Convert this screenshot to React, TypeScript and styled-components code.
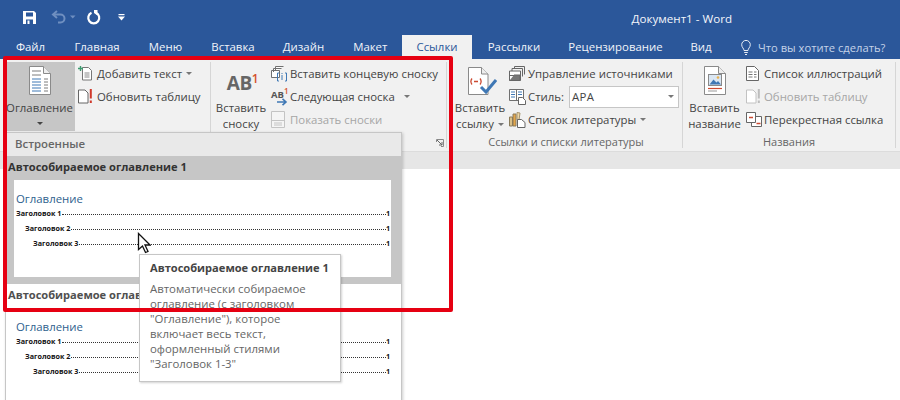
import React from "react";
import styled, { createGlobalStyle } from "styled-components";

const Global = createGlobalStyle`
  html, body { margin: 0; padding: 0; background: #fff; overflow: hidden; }
  * { box-sizing: border-box; }
`;

const Page = styled.div`
  position: relative;
  width: 900px;
  height: 400px;
  overflow: hidden;
  background: #fff;
  font-family: "Open Sans", "Noto Sans", sans-serif;
  font-size: 11.4px;
  color: #444;
  display: flex;
  flex-direction: column;
`;

const TitleBar = styled.div`
  height: 35px;
  flex: none;
  background: #2b579a;
  display: flex;
  align-items: center;
  padding-left: 22px;
  color: #fff;
`;
const Qat = styled.div`
  display: flex;
  align-items: center;
`;
const QatSlot = styled.div<{ $ml: number }>`
  margin-left: ${(p) => p.$ml}px;
  display: flex;
`;
const Title = styled.div`
  margin-left: auto;
  margin-right: 168px;
  margin-top: 1px;
  font-size: 11.6px;
  color: #f4f6fa;
`;

const Tabs = styled.div`
  height: 24px;
  flex: none;
  background: #2b579a;
  display: flex;
  padding-left: 0.5px;
`;
const Tab = styled.div<{ $active?: boolean; $w: number }>`
  width: ${(p) => p.$w}px;
  flex: none;
  text-align: center;
  line-height: 24px;
  white-space: nowrap;
  color: ${(p) => (p.$active ? "#2b579a" : "#f1f4f9")};
  background: ${(p) => (p.$active ? "#f1f1f1" : "transparent")};
`;
const Tell = styled.div`
  display: flex;
  align-items: center;
  gap: 7px;
  margin-left: 14px;
  font-size: 11.2px;
  color: #c5d3e8;
  white-space: nowrap;
`;

const Ribbon = styled.div`
  height: 93px;
  flex: none;
  background: #f1f1f1;
  border-bottom: 1px solid #dcdcdc;
  display: flex;
  padding: 3px 0 3px;
`;
const Group = styled.section<{ $w: number; $pad: number }>`
  position: relative;
  width: ${(p) => p.$w}px;
  flex: none;
  padding-left: ${(p) => p.$pad}px;
  border-right: 1px solid #d6d6d6;
  display: flex;
  flex-direction: column;
`;
const GroupBody = styled.div`
  display: flex;
  height: 69px;
  flex: none;
`;
const GroupLabel = styled.div`
  text-align: center;
  line-height: 16px;
  margin-top: 3px;
  padding-right: 6px;
  font-size: 11px;
  color: #666;
  white-space: nowrap;
`;
const Launcher = styled.svg`
  position: absolute;
  right: 2px;
  bottom: 1px;
`;

const BigButton = styled.div<{ $w: number; $on?: boolean }>`
  width: ${(p) => p.$w}px;
  flex: none;
  display: flex;
  flex-direction: column;
  align-items: center;
  padding-right: ${(p) => (p.$on ? 3 : 0)}px;
  background: ${(p) => (p.$on ? "#c6c6c6" : "transparent")};
  line-height: 16px;
  white-space: nowrap;
`;
const BigIcon = styled.div`
  height: 38px;
  flex: none;
  padding-bottom: 5px;
  display: flex;
  align-items: flex-end;
  justify-content: center;
`;
const Caret = styled.i<{ $dark?: boolean; $ml?: number }>`
  display: inline-block;
  width: 0;
  height: 0;
  border-left: 3px solid transparent;
  border-right: 3px solid transparent;
  border-top: 3px solid ${(p) => (p.$dark ? "#444" : "#777")};
  margin-left: ${(p) => p.$ml ?? 4}px;
  vertical-align: 2px;
`;
const CaretLine = styled.div`
  height: 16px;
  line-height: 14px;
  margin-left: -4px;
`;
const BigAb = styled.div`
  font-size: 19px;
  font-weight: 700;
  line-height: 24px;
  color: #666;
  margin-left: 3px;
  letter-spacing: -0.4px;
`;
const SupOne = styled.span<{ $size: number }>`
  color: #d4502c;
  font-size: ${(p) => p.$size}px;
  font-weight: 600;
  vertical-align: super;
  line-height: 0;
`;

const SmallColumn = styled.div<{ $ml: number }>`
  margin-left: ${(p) => p.$ml}px;
  display: flex;
  flex-direction: column;
`;
const SmallRow = styled.div<{ $off?: boolean }>`
  height: 23px;
  display: flex;
  align-items: center;
  white-space: nowrap;
  color: ${(p) => (p.$off ? "#a6a6a6" : "#444")};
`;
const IconBox = styled.div<{ $w: number }>`
  width: ${(p) => p.$w}px;
  flex: none;
  display: flex;
  align-items: center;
`;
const SmallAb = styled.span`
  position: relative;
  display: block;
  width: 17px;
  height: 18px;
  font-size: 9.5px;
  font-weight: 700;
  line-height: 13px;
  color: #555;
`;
const NextArrow = styled.svg`
  position: absolute;
  right: 0;
  bottom: 0;
`;
const SelectBox = styled.div`
  width: 110px;
  height: 22px;
  margin-left: 5px;
  background: #fff;
  border: 1px solid #c6c6c6;
  display: flex;
  align-items: center;
  justify-content: space-between;
  padding: 0 4px 0 2px;
  letter-spacing: 0.4px;
`;

const Band = styled.div`
  height: 17px;
  flex: none;
  background: #e6e6e6;
`;

const Gallery = styled.div`
  position: absolute;
  left: 5px;
  top: 132px;
  width: 397px;
  height: 290px;
  background: #fff;
  border: 1px solid #c6c6c6;
  box-shadow: 1px 1px 3px rgba(0, 0, 0, 0.2);
`;
const GalleryHead = styled.div`
  height: 23px;
  background: #e9e9e9;
  line-height: 22px;
  padding-left: 9px;
  font-weight: 600;
  color: #666;
`;
const GalleryItem = styled.div<{ $on?: boolean }>`
  background: ${(p) => (p.$on ? "#c6c6c6" : "#fff")};
  height: ${(p) => (p.$on ? 128 : 120)}px;
  padding: 0 10px 0 8px;
`;
const ItemTitle = styled.div<{ $on?: boolean }>`
  height: 24px;
  line-height: 21px;
  margin-left: -6px;
  font-size: 11.1px;
  font-weight: 700;
  color: ${(p) => (p.$on ? "#333" : "#505050")};
  white-space: nowrap;
`;
const Preview = styled.div`
  height: 97px;
  background: #fff;
  padding: 12px 1px 0 2px;
`;
const PreviewHead = styled.div`
  color: #2e5f8e;
  font-size: 11.4px;
  line-height: 14px;
`;
const TocRow = styled.div<{ $indent: number }>`
  display: flex;
  align-items: baseline;
  height: 15px;
  line-height: 15px;
  font-size: 7.2px;
  font-weight: 700;
  color: #111;
  padding-left: ${(p) => p.$indent}px;
  white-space: nowrap;
`;
const Leader = styled.span`
  flex: 1;
  border-bottom: 1px dotted #333;
  margin-left: 1px;
  transform: translateY(-1px);
`;

const Tooltip = styled.div`
  position: absolute;
  left: 139px;
  top: 254px;
  width: 202px;
  height: 128px;
  background: #fff;
  border: 1px solid #c6c6c6;
  box-shadow: 1px 1px 2px rgba(0, 0, 0, 0.18);
  padding: 5px 10px;
`;
const TipTitle = styled.div`
  font-size: 11.1px;
  font-weight: 700;
  line-height: 16px;
  color: #444;
  margin-bottom: 5px;
  white-space: nowrap;
`;
const TipLine = styled.div`
  line-height: 15px;
  color: #666;
  white-space: nowrap;
`;

const Annotation = styled.div`
  position: absolute;
  left: 3px;
  top: 56px;
  width: 450px;
  height: 256px;
  border: 4.5px solid #e60012;
  border-radius: 2px;
`;
const Pointer = styled.svg`
  position: absolute;
  left: 137px;
  top: 232px;
`;

const SaveIcon = () => (
  <svg width="15" height="15" viewBox="0 0 15 15">
    <path d="M1 1h11l2 2v11H1z" fill="#fff" />
    <rect x="4" y="2.5" width="7" height="4" fill="#2b579a" />
    <rect x="4" y="9.5" width="7" height="4.5" fill="#2b579a" />
    <rect x="5.5" y="10.5" width="2" height="3.5" fill="#fff" />
  </svg>
);
const UndoIcon = () => (
  <svg width="25" height="15" viewBox="0 0 25 15" fill="none">
    <path d="M2.500 4.500h7a4 4 0 0 1 0 8H7" stroke="#6f8fc0" strokeWidth="2" />
    <path d="M6 1 2 4.500 6 8" stroke="#6f8fc0" strokeWidth="2" />
    <path d="M19 5.500h5.500l-2.750 3z" fill="#6f8fc0" />
  </svg>
);
const RedoIcon = () => (
  <svg width="15" height="15" viewBox="0 0 15 15" fill="none">
    <path d="M5.500 2.800a5.500 5.500 0 1 0 4.500 0" stroke="#fff" strokeWidth="2.200" />
    <path d="M8 0h3.500v5.500L8 3z" fill="#fff" />
  </svg>
);
const QatMore = () => (
  <svg width="7" height="7" viewBox="0 0 7 7">
    <rect x="0.500" y="0" width="6" height="1.200" fill="#fff" />
    <path d="M0 2.500h7L3.500 6.500z" fill="#fff" />
  </svg>
);
const Bulb = () => (
  <svg width="10" height="15" viewBox="0 0 10 15" fill="none" stroke="#e6ecf5" strokeWidth="1">
    <path d="M3 10.500C3 8.500 .7 7.500 .7 4.700a4.300 4.300 0 0 1 8.600 0C9.300 7.500 7 8.500 7 10.500z" />
    <path d="M3.200 12.500h3.600M4 14.500h2" />
  </svg>
);
const Sheet = ({ children }: { children?: React.ReactNode }) => (
  <svg width="22" height="29" viewBox="0 0 22 29" fill="none">
    <path d="M.5.500h14l7 7v21H.5z" fill="#fff" stroke="#8a8a8a" />
    <path d="M14.500.500v7h7" fill="#eee" stroke="#8a8a8a" />
    {children}
  </svg>
);
const TocIcon = () => (
  <Sheet>
    <path d="M3 5h9M3 9h9" stroke="#7d7d7d" />
    <path d="M3 13h9M3 16h9M3 19h9M3 22h9M3 25h9" stroke="#3f78b5" />
    <path d="M15 13h4M15 16h4M15 19h4M15 22h4M15 25h4" stroke="#7d7d7d" />
  </Sheet>
);
const AddTextIcon = () => (
  <svg width="15" height="15" viewBox="0 0 15 15" fill="none">
    <path d="M4.500 1.500h6l3 3v9.500h-9z" fill="#fff" stroke="#777" />
    <path d="M6.500 7h5M6.500 9h5M6.500 11h5" stroke="#8a8a8a" />
    <path d="M2.500 0v5M0 2.500h5" stroke="#3c9a6f" strokeWidth="1.400" />
  </svg>
);
const UpdateIcon = ({ off }: { off?: boolean }) => {
  const line = off ? "#c2c2c2" : "#666";
  const mark = off ? "#bdbdbd" : "#d0392b";
  return (
    <svg width="15" height="15" viewBox="0 0 15 15" fill="none">
      <path d="M.5 1h6.500l3 3v10H.5z" fill="#fff" stroke={line} />
      <path d="M12.800 0v9.500M12.800 11.500v2.500" stroke={mark} strokeWidth="2" />
    </svg>
  );
};
const EndnoteIcon = () => (
  <svg width="17" height="16" viewBox="0 0 17 16" fill="none">
    <path d="M4.500 4V.5h8M2.500 6V2.500h8M.5 8V4.500h8v7H.5z" stroke="#707070" fill="#fff" />
    <path d="M8 7H6.500v8H8M14 7h1.500v8H14" stroke="#3f78b5" />
    <path d="M11 7v1M11 9v5" stroke="#3f78b5" />
  </svg>
);
const NoteIcon = () => (
  <svg width="16" height="17" viewBox="0 0 16 17" fill="none">
    <path d="M.5.500h13v16H.5z" fill="#f5f5f5" stroke="#c4c4c4" />
    <path d="M.5 9.500h13M3 12h8M3 14h8" stroke="#c4c4c4" />
  </svg>
);
const CiteIcon = () => (
  <svg width="29" height="28" viewBox="0 0 29 28" fill="none" style={{ marginLeft: 4 }}>
    <path d="M.5.500h13l6.500 6.500v20.500H.5z" fill="#fff" stroke="#8a8a8a" />
    <path d="M13.500.500v6.500h6.500" fill="#eee" stroke="#8a8a8a" />
    <path d="M4 11.500c-1.500 2-1.500 4 0 6M12 11.500c1.500 2 1.500 4 0 6M6 14.500h4" stroke="#cc4a32" strokeWidth="1.300" />
    <path d="M13 20l5 5 10-12" stroke="#3f78b5" strokeWidth="3" />
  </svg>
);
const SourcesIcon = () => (
  <svg width="16" height="15" viewBox="0 0 16 15" fill="none" stroke="#666">
    <path d="M5.500 3V.5h10v8" />
    <path d="M3 5V2.500h10.500v8" />
    <path d="M.5 5h11v9.500H.5z" fill="#fff" />
    <path d="M.5 9.500h11" />
    <path d="M5 9h6v5.500H.5" fill="#777" />
  </svg>
);
const StyleIcon = () => (
  <svg width="17" height="16" viewBox="0 0 17 16" fill="none">
    <path d="M.5.500h14v11H.5zM7.500.500v11" fill="#fff" stroke="#707070" />
    <path d="M2 3h4M2 5.500h4M2 8h4M9 3h4M9 5.500h4" stroke="#3f78b5" />
    <path d="M9.500 8.500h4l3 3v4h-7z" fill="#fff" stroke="#666" />
  </svg>
);
const BibIcon = () => (
  <svg width="17" height="16" viewBox="0 0 17 16" fill="none">
    <path d="M.5 5h3v9h-3z" fill="#d9c089" stroke="#8a7b5a" />
    <path d="M4 2h3v12H4z" fill="#e4a548" stroke="#8a7b5a" />
    <path d="M8 .5l3 .5-1 7H8z" fill="#efd8a8" stroke="#a5946f" />
    <path d="M8.500 7.500h4l3.500 3v5H8.500z" fill="#fff" stroke="#666" />
  </svg>
);
const CaptionIcon = () => (
  <Sheet>
    <rect x="4.500" y="8.500" width="13" height="11" fill="#dbe7f3" stroke="#8a8a8a" />
    <path d="M5.500 18.500l4-5 3 3 1.500-1.500 3 3.500z" fill="#3f78b5" />
    <circle cx="14" cy="11.500" r="1.300" fill="#e9b04e" />
    <path d="M4 22.500h14" stroke="#cc4a32" strokeWidth="1.200" />
    <path d="M4 25h9" stroke="#999" />
  </Sheet>
);
const FiguresIcon = () => (
  <svg width="13" height="15" viewBox="0 0 13 15" fill="none">
    <path d="M.5.500h8l4 4v10H.5z" fill="#fff" stroke="#666" />
    <path d="M2.500 6h4M2.500 8.500h4M2.500 11h4M8 6h2.500M8 8.500h2.500M8 11h2.500" stroke="#777" />
  </svg>
);
const CrossRefIcon = () => (
  <svg width="16" height="15" viewBox="0 0 16 15" fill="none">
    <path d="M5.500 4.500h10v10h-10z" fill="#fff" stroke="#666" />
    <path d="M.5.500h9v10H.5z" fill="#fff" stroke="#666" />
    <path d="M3 5.500h4M10.500 11.500h4" stroke="#cc4a32" strokeWidth="1.300" />
  </svg>
);

const TocBlock = () => (
  <>
    <PreviewHead>Оглавление</PreviewHead>
    <TocRow $indent={0}>Заголовок 1<Leader />1</TocRow>
    <TocRow $indent={9}>Заголовок 2<Leader />1</TocRow>
    <TocRow $indent={17}>Заголовок 3<Leader />1</TocRow>
  </>
);

const tabs: [string, number][] = [
  ["Файл", 60],
  ["Главная", 73],
  ["Меню", 64],
  ["Вставка", 71],
  ["Дизайн", 70],
  ["Макет", 63.5],
  ["Ссылки", 70],
  ["Рассылки", 84],
  ["Рецензирование", 119],
  ["Вид", 52],
];
const tipLines = [
  "Автоматически собираемое",
  "оглавление (с заголовком",
  "\"Оглавление\"), которое",
  "включает весь текст,",
  "оформленный стилями",
  "\"Заголовок 1-3\"",
];

export default function App() {
  return (
    <Page>
      <Global />
      <TitleBar>
        <Qat>
          <SaveIcon />
          <QatSlot $ml={14}><UndoIcon /></QatSlot>
          <QatSlot $ml={10}><RedoIcon /></QatSlot>
          <QatSlot $ml={17}><QatMore /></QatSlot>
        </Qat>
        <Title>Документ1 - Word</Title>
      </TitleBar>
      <Tabs>
        {tabs.map(([t, w]) => (
          <Tab key={t} $w={w} $active={t === "Ссылки"}>{t}</Tab>
        ))}
        <Tell><Bulb />Что вы хотите сделать?</Tell>
      </Tabs>
      <Ribbon>
        <Group $w={211} $pad={7}>
          <GroupBody>
            <BigButton $w={68} $on>
              <BigIcon><TocIcon /></BigIcon>
              Оглавление
              <CaretLine><Caret $dark /></CaretLine>
            </BigButton>
            <SmallColumn $ml={3}>
              <SmallRow>
                <IconBox $w={19}><AddTextIcon /></IconBox>
                Добавить текст<Caret />
              </SmallRow>
              <SmallRow>
                <IconBox $w={19}><UpdateIcon /></IconBox>
                Обновить таблицу
              </SmallRow>
            </SmallColumn>
          </GroupBody>
        </Group>
        <Group $w={236} $pad={5}>
          <GroupBody>
            <BigButton $w={50}>
              <BigIcon>
                <BigAb>AB<SupOne $size={12}>1</SupOne></BigAb>
              </BigIcon>
              Вставить
              <span>сноску</span>
            </BigButton>
            <SmallColumn $ml={5}>
              <SmallRow>
                <IconBox $w={19}><EndnoteIcon /></IconBox>
                Вставить концевую сноску
              </SmallRow>
              <SmallRow>
                <IconBox $w={19}>
                  <SmallAb>
                    AB<SupOne $size={8}>1</SupOne>
                    <NextArrow width="11" height="8" viewBox="0 0 11 8" fill="none">
                      <path d="M0 4h8M5.500 .8 9 4 5.500 7.200" stroke="#3f78b5" strokeWidth="1.600" />
                    </NextArrow>
                  </SmallAb>
                </IconBox>
                Следующая сноска
                <Caret $ml={9} />
              </SmallRow>
              <SmallRow $off>
                <IconBox $w={19}><NoteIcon /></IconBox>
                Показать сноски
              </SmallRow>
            </SmallColumn>
          </GroupBody>
          <Launcher width="8" height="8" viewBox="0 0 8 8" fill="none">
            <path d="M.5 3V.5H7.500V7.500H5" stroke="#888" />
            <path d="M1 1l5 5M3 6h3V3" stroke="#666" />
          </Launcher>
        </Group>
        <Group $w={236} $pad={9}>
          <GroupBody>
            <BigButton $w={48}>
              <BigIcon><CiteIcon /></BigIcon>
              Вставить
              <span>ссылку<Caret /></span>
            </BigButton>
            <SmallColumn $ml={5}>
              <SmallRow>
                <IconBox $w={19}><SourcesIcon /></IconBox>
                Управление источниками
              </SmallRow>
              <SmallRow>
                <IconBox $w={19}><StyleIcon /></IconBox>
                Стиль:
                <SelectBox>APA<Caret $ml={0} /></SelectBox>
              </SmallRow>
              <SmallRow>
                <IconBox $w={19}><BibIcon /></IconBox>
                Список литературы<Caret />
              </SmallRow>
            </SmallColumn>
          </GroupBody>
          <GroupLabel>Ссылки и списки литературы</GroupLabel>
        </Group>
        <Group $w={213} $pad={6}>
          <GroupBody>
            <BigButton $w={51}>
              <BigIcon><CaptionIcon /></BigIcon>
              Вставить
              <span>название</span>
            </BigButton>
            <SmallColumn $ml={6}>
              <SmallRow>
                <IconBox $w={18}><FiguresIcon /></IconBox>
                Список иллюстраций
              </SmallRow>
              <SmallRow $off>
                <IconBox $w={18}><UpdateIcon off /></IconBox>
                Обновить таблицу
              </SmallRow>
              <SmallRow>
                <IconBox $w={18}><CrossRefIcon /></IconBox>
                Перекрестная ссылка
              </SmallRow>
            </SmallColumn>
          </GroupBody>
          <GroupLabel>Названия</GroupLabel>
        </Group>
      </Ribbon>
      <Band />
      <Gallery>
        <GalleryHead>Встроенные</GalleryHead>
        <GalleryItem $on>
          <ItemTitle $on>Автособираемое оглавление 1</ItemTitle>
          <Preview><TocBlock /></Preview>
        </GalleryItem>
        <GalleryItem>
          <ItemTitle>Автособираемое оглав</ItemTitle>
          <Preview><TocBlock /></Preview>
        </GalleryItem>
      </Gallery>
      <Pointer width="14" height="22" viewBox="0 0 14 22">
        <path d="M1.500 1.500v16l4-3.500 3 6.500 2.500-1-3-6.500h5z" fill="#fff" stroke="#111" strokeWidth="1.300" />
      </Pointer>
      <Tooltip>
        <TipTitle>Автособираемое оглавление 1</TipTitle>
        {tipLines.map((l) => (
          <TipLine key={l}>{l}</TipLine>
        ))}
      </Tooltip>
      <Annotation />
    </Page>
  );
}
